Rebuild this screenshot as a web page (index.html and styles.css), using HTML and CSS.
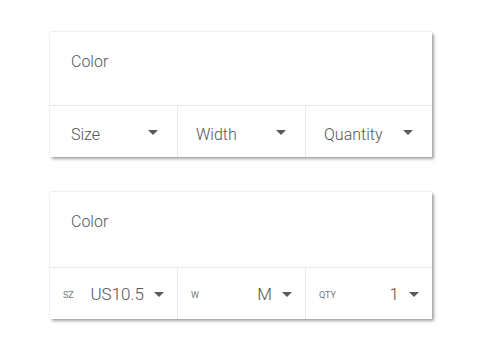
FILE: index.html
```html
<!DOCTYPE html>
<html>
<head>
<meta charset="utf-8">
<link rel="stylesheet" href="styles.css">
</head>
<body>
<div class="page">
  <div class="card">
    <div class="color">Color</div>
    <div class="row">
      <div class="cell"><span class="label">Size</span><span class="arrow"></span></div>
      <div class="cell"><span class="label">Width</span><span class="arrow"></span></div>
      <div class="cell"><span class="label">Quantity</span><span class="arrow"></span></div>
    </div>
  </div>
  <div class="card compact">
    <div class="color">Color</div>
    <div class="row">
      <div class="cell"><span class="tag">SZ</span><span class="value">US10.5</span><span class="arrow"></span></div>
      <div class="cell"><span class="tag">W</span><span class="value">M</span><span class="arrow"></span></div>
      <div class="cell"><span class="tag">QTY</span><span class="value">1</span><span class="arrow"></span></div>
    </div>
  </div>
</div>
</body>
</html>
```
FILE: styles.css
```css
html, body {
  margin: 0;
  background: #ffffff;
  font-family: Roboto, "Liberation Sans", sans-serif;
}
.page {
  display: flex;
  flex-direction: column;
  gap: 35px;
  padding: 32px 0 45px 50px;
}
.card {
  width: 382px;
  background: #fff;
  box-shadow: 0 0 2px rgba(0,0,0,0.14), 2px 2px 3px rgba(0,0,0,0.35);
}
.color {
  height: 74px;
  box-sizing: border-box;
  padding: 20px 0 0 21px;
  font-size: 16px;
  font-weight: 300;
  color: #555;
  border-bottom: 1px solid #e8e8e8;
}
.compact .color {
  height: 76px;
}
.row {
  display: grid;
  grid-template-columns: 127px 128px 127px;
  height: 51px;
}
.cell {
  display: flex;
  align-items: center;
  padding: 0 19px 0 18px;
  border-left: 1px solid #e8e8e8;
  font-size: 16px;
  font-weight: 300;
  color: #555;
}
.cell:first-child {
  border-left: none;
  padding-left: 21px;
}
.label {
  flex: 1;
  margin-top: 6px;
}
.arrow {
  width: 0;
  height: 0;
  border-left: 5px solid transparent;
  border-right: 5px solid transparent;
  border-top: 5px solid #5a5a5a;
  margin-top: 1px;
}
.compact .cell {
  padding: 0 13px 0 13px;
}
.tag {
  font-size: 9px;
  font-weight: 400;
  color: #777;
  flex: 1;
  margin-top: 2px;
}
.value {
  font-size: 17px;
  color: #555;
  margin-right: 10px;
}
```
